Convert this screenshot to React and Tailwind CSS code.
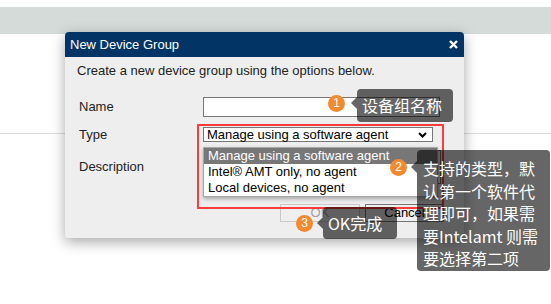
import React from "react";

const Badge = ({ n, className }) => (
  <div
    className={`absolute w-[17px] h-[17px] rounded-full bg-[#f28a2f] text-white text-[12px] leading-[17px] text-center ${className}`}
  >
    {n}
  </div>
);

const Tip = ({ className, arrowTop, children }) => (
  <div
    className={`absolute bg-black/60 text-white rounded-[4px] text-[16px] ${className}`}
    style={{ fontFamily: '"Noto Sans CJK SC", "Liberation Sans", sans-serif' }}
  >
    <span
      className={`absolute left-[-6px] w-0 h-0 border-y-[6px] border-y-transparent border-r-[6px] border-r-black/60 ${arrowTop}`}
    />
    {children}
  </div>
);

const App = () => {
  return (
    <div
      className="relative w-[551px] h-[304px] overflow-hidden bg-white"
      style={{ fontFamily: '"Liberation Sans", Arial, sans-serif' }}
    >
      {/* page behind the dialog */}
      <div className="h-[7px]" />
      <div className="h-[27px] bg-[#d5dbd9]" />
      <div className="mt-[99px] border-t border-[#dcdcdc]" />

      {/* dialog */}
      <div className="absolute left-[65px] top-[32px] w-[399px] h-[206px] flex flex-col rounded-[4px] overflow-hidden shadow-[0_4px_14px_rgba(0,0,0,0.35)]">
        <div className="h-[25px] bg-[#023466] flex items-center justify-between pl-[5px] pr-[6px] text-white text-[13px]">
          <span>New Device Group</span>
          <svg width="9" height="9" viewBox="0 0 9 9">
            <path d="M1 1L8 8M8 1L1 8" stroke="white" strokeWidth="2.4" />
          </svg>
        </div>
        <div className="flex-1 bg-[#eeeeee] px-[12px] pt-[6px] text-[13px] text-[#222]">
          <p className="leading-[15px]">Create a new device group using the options below.</p>
          <div className="mt-[19px] pl-[2px]">
            <div className="flex items-center h-[20px]">
              <span className="w-[124px]">Name</span>
              <div className="w-[237px] h-[20px] bg-white border border-[#767676]" />
            </div>
            <div className="flex items-center h-[15px] mt-[10px]">
              <span className="w-[124px]">Type</span>
              <div className="w-[230px] h-[15px] bg-white border border-[#767676] flex items-center justify-between pl-[3px] pr-[5px] text-black leading-[13px]">
                <span>Manage using a software agent</span>
                <svg width="9" height="6" viewBox="0 0 9 6">
                  <path d="M1 1L4.5 4.5L8 1" stroke="black" strokeWidth="2" fill="none" />
                </svg>
              </div>
            </div>
            <div className="flex items-center h-[36px] mt-[7px]">
              <span className="w-[124px]">Description</span>
              <div className="w-[238px] h-[34px] bg-white border border-[#767676]" />
            </div>
          </div>
          <div className="mt-[19px] flex justify-end gap-[5px] pr-[8px]">
            <div className="w-[80px] h-[18px] border border-[#c9c9c9] bg-[#efefef] text-[#a0a0a0] flex items-center justify-center">
              OK
            </div>
            <div className="w-[79px] h-[18px] border border-[#767676] bg-[#efefef] text-black flex items-center justify-center">
              Cancel
            </div>
          </div>
        </div>
      </div>

      {/* open select list */}
      <div className="absolute left-[203px] top-[147px] w-[235px] h-[50px] bg-white border border-[#a8a8a8] shadow-[0_2px_4px_rgba(0,0,0,0.3)] text-[13px] text-black">
        <div className="h-[16px] bg-[#777777] text-white pl-[4px] leading-[16px]">Manage using a software agent</div>
        <div className="h-[16px] pl-[4px] leading-[16px]">Intel® AMT only, no agent</div>
        <div className="h-[16px] pl-[4px] leading-[16px]">Local devices, no agent</div>
      </div>

      {/* annotation frame */}
      <div className="absolute left-[197px] top-[124px] w-[247px] h-[85px] border-2 border-[#ff3b3b]" />

      <Badge n="1" className="left-[328px] top-[95px]" />
      <Tip className="left-[357px] top-[89px] w-[96px] h-[33px] pl-[5px] leading-[33px]" arrowTop="top-[8px]">
        设备组名称
      </Tip>

      <Badge n="2" className="left-[390px] top-[159px]" />
      <Tip className="left-[417px] top-[150px] w-[133px] h-[121px] pl-[6px] pt-[7px] leading-[22.5px]" arrowTop="top-[11px]">
        支持的类型，默
        <br />
        认第一个软件代
        <br />
        理即可，如果需
        <br />
        要Intelamt 则需
        <br />
        要选择第二项
      </Tip>

      <Badge n="3" className="left-[296px] top-[215px]" />
      <Tip className="left-[323px] top-[207px] w-[74px] h-[32px] pl-[5px] leading-[32px]" arrowTop="top-[10px]">
        OK完成
      </Tip>
    </div>
  );
};

export default App;
